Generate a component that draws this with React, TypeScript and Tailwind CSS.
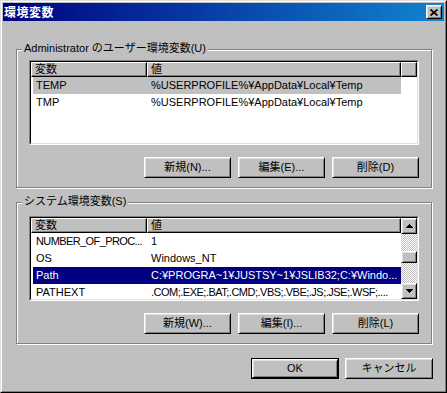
import React from "react";

const FONT = "font-['Liberation_Sans','Noto_Sans_CJK_JP',sans-serif]";

function Bevel({ className = "", children }: { className?: string; children?: React.ReactNode }) {
  return (
    <div
      className={`border border-t-white border-l-white border-b-black border-r-black shadow-[inset_1px_1px_0_#dfdfdf,inset_-1px_-1px_0_#808080] bg-[#c0c0c0] ${className}`}
    >
      {children}
    </div>
  );
}

function Btn({ label, isDefault, w = 87 }: { label: string; isDefault?: boolean; w?: number }) {
  if (isDefault) {
    return (
      <div className="h-[21px] w-[88px] border border-black">
        <Bevel className="h-full w-full flex items-center justify-center text-black">{label}</Bevel>
      </div>
    );
  }
  return (
    <Bevel className={`h-[21px] ${w === 88 ? "w-[88px]" : "w-[87px]"} flex items-center justify-center text-black`}>
      {label}
    </Bevel>
  );
}

function HeaderCell({ w, children }: { w: string; children?: React.ReactNode }) {
  return (
    <div
      className={`${w} h-[15px] shrink-0 border border-t-white border-l-white border-b-black border-r-black shadow-[inset_-1px_-1px_0_#808080] bg-[#c0c0c0] pl-[3px] leading-[13px] whitespace-nowrap overflow-hidden`}
    >
      {children}
    </div>
  );
}

type Row = { name: string; value: string; sel?: "active" | "inactive"; tightName?: boolean; tightValue?: boolean };

function Rows({ rows }: { rows: Row[] }) {
  return (
    <>
      {rows.map((r) => {
        const c =
          r.sel === "active"
            ? "bg-[#000080] text-white"
            : r.sel === "inactive"
            ? "bg-[#c0c0c0] text-black"
            : "text-black";
        return (
          <div key={r.name} className={`ml-[2px] w-[368px] h-[17px] shrink-0 flex items-center ${c}`}>
            <div
              className={`w-[114px] shrink-0 pl-[3px] whitespace-nowrap overflow-hidden ${
                r.tightName ? "tracking-[-0.6px]" : ""
              }`}
            >
              {r.name}
            </div>
            <div
              className={`w-[254px] shrink-0 pl-[4px] whitespace-nowrap overflow-hidden ${
                r.tightValue ? "tracking-[-0.5px]" : ""
              }`}
            >
              {r.value}
            </div>
          </div>
        );
      })}
    </>
  );
}

function Arrow({ up }: { up?: boolean }) {
  return (
    <svg width="7" height="4" viewBox="0 0 7 4" shapeRendering="crispEdges">
      {up ? <polygon points="0,4 3.5,0 7,4" fill="#000" /> : <polygon points="0,0 3.5,4 7,0" fill="#000" />}
    </svg>
  );
}

function ListBox({ children }: { children: React.ReactNode }) {
  return (
    <div className="w-[390px] h-[85px] border border-t-[#808080] border-l-[#808080] border-b-white border-r-white">
      <div className="h-full w-full border border-t-black border-l-black border-b-[#dfdfdf] border-r-[#dfdfdf] bg-white overflow-hidden flex">
        {children}
      </div>
    </div>
  );
}

function Group({ legend, className, children }: { legend: string; className: string; children: React.ReactNode }) {
  return (
    <div
      className={`relative w-[416px] border border-[#808080] shadow-[1px_1px_0_#fff,inset_1px_1px_0_#fff] ${className}`}
    >
      <div className="absolute -top-[9px] left-[5px] bg-[#c0c0c0] px-[2px] leading-[14px] text-black whitespace-nowrap">
        {legend}
      </div>
      {children}
    </div>
  );
}

function ButtonRow({ labels }: { labels: string[] }) {
  return (
    <div className="flex justify-end gap-[7px] w-[390px]">
      {labels.map((l) => (
        <Btn key={l} label={l} />
      ))}
    </div>
  );
}

export default function App() {
  const userRows: Row[] = [
    { name: "TEMP", value: "%USERPROFILE%¥AppData¥Local¥Temp", sel: "inactive", tightValue: false },
    { name: "TMP", value: "%USERPROFILE%¥AppData¥Local¥Temp" },
  ];
  const sysRows: Row[] = [
    { name: "NUMBER_OF_PROC...", value: "1", tightName: true },
    { name: "OS", value: "Windows_NT" },
    { name: "Path", value: "C:¥PROGRA~1¥JUSTSY~1¥JSLIB32;C:¥Windo...", sel: "active" },
    { name: "PATHEXT", value: ".COM;.EXE;.BAT;.CMD;.VBS;.VBE;.JS;.JSE;.WSF;....", tightValue: true },
  ];

  return (
    <div className={`${FONT} text-[11px] w-[447px] h-[393px] border border-t-[#dfdfdf] border-l-[#dfdfdf] border-b-black border-r-black`}>
      <div className="h-full w-full border border-t-white border-l-white border-b-[#808080] border-r-[#808080] bg-[#c0c0c0] p-[1px] flex flex-col">
        {/* Title bar */}
        <div className="h-[18px] shrink-0 flex items-center justify-between pl-[1px] pr-[2px] bg-[linear-gradient(to_right,#000080,#1084d0)]">
          <span className="text-white font-bold text-[12px] tracking-[0.5px] leading-[18px] font-['Noto_Sans_CJK_JP',sans-serif]">
            環境変数
          </span>
          <Bevel className="w-[16px] h-[14px] flex items-center justify-center">
            <svg width="8" height="7" viewBox="0 0 8 7">
              <path d="M0.5 0.5 L7.5 6.5 M7.5 0.5 L0.5 6.5" stroke="#000" strokeWidth="1.7" />
            </svg>
          </Bevel>
        </div>

        {/* Content */}
        <div className="flex flex-col pl-[13px]">
          <Group legend="Administrator のユーザー環境変数(U)" className="mt-[28px] h-[139px] pl-[12px] pt-[10px]">
            <ListBox>
              <div className="flex flex-col">
                <div className="flex">
                  <HeaderCell w="w-[116px]">変数</HeaderCell>
                  <HeaderCell w="w-[254px]">値</HeaderCell>
                  <HeaderCell w="w-[16px]" />
                </div>
                <Rows rows={userRows} />
              </div>
            </ListBox>
            <div className="mt-[12px]">
              <ButtonRow labels={["新規(N)...", "編集(E)...", "削除(D)"]} />
            </div>
          </Group>

          <Group legend="システム環境変数(S)" className="mt-[14px] h-[142px] pl-[12px] pt-[13px]">
            <ListBox>
              <div className="flex flex-col w-[370px] shrink-0">
                <div className="flex">
                  <HeaderCell w="w-[116px]">変数</HeaderCell>
                  <HeaderCell w="w-[254px]">値</HeaderCell>
                </div>
                <Rows rows={sysRows} />
              </div>
              <div className="w-[16px] h-full shrink-0 flex flex-col">
                <Bevel className="h-[16px] shrink-0 flex items-center justify-center">
                  <Arrow up />
                </Bevel>
                <div className="h-[17px] shrink-0 bg-[image:conic-gradient(#fff_25%,#c0c0c0_0_50%,#fff_0_75%,#c0c0c0_0)] bg-[length:2px_2px]" />
                <Bevel className="h-[12px] shrink-0" />
                <div className="flex-1 bg-[image:conic-gradient(#fff_25%,#c0c0c0_0_50%,#fff_0_75%,#c0c0c0_0)] bg-[length:2px_2px]" />
                <Bevel className="h-[16px] shrink-0 flex items-center justify-center">
                  <Arrow />
                </Bevel>
              </div>
            </ListBox>
            <div className="mt-[12px]">
              <ButtonRow labels={["新規(W)...", "編集(I)...", "削除(L)"]} />
            </div>
          </Group>

          <div className="mt-[14px] w-[417px] flex justify-end gap-[6px]">
            <Btn label="OK" isDefault />
            <Btn label="キャンセル" w={88} />
          </div>
        </div>
      </div>
    </div>
  );
}
